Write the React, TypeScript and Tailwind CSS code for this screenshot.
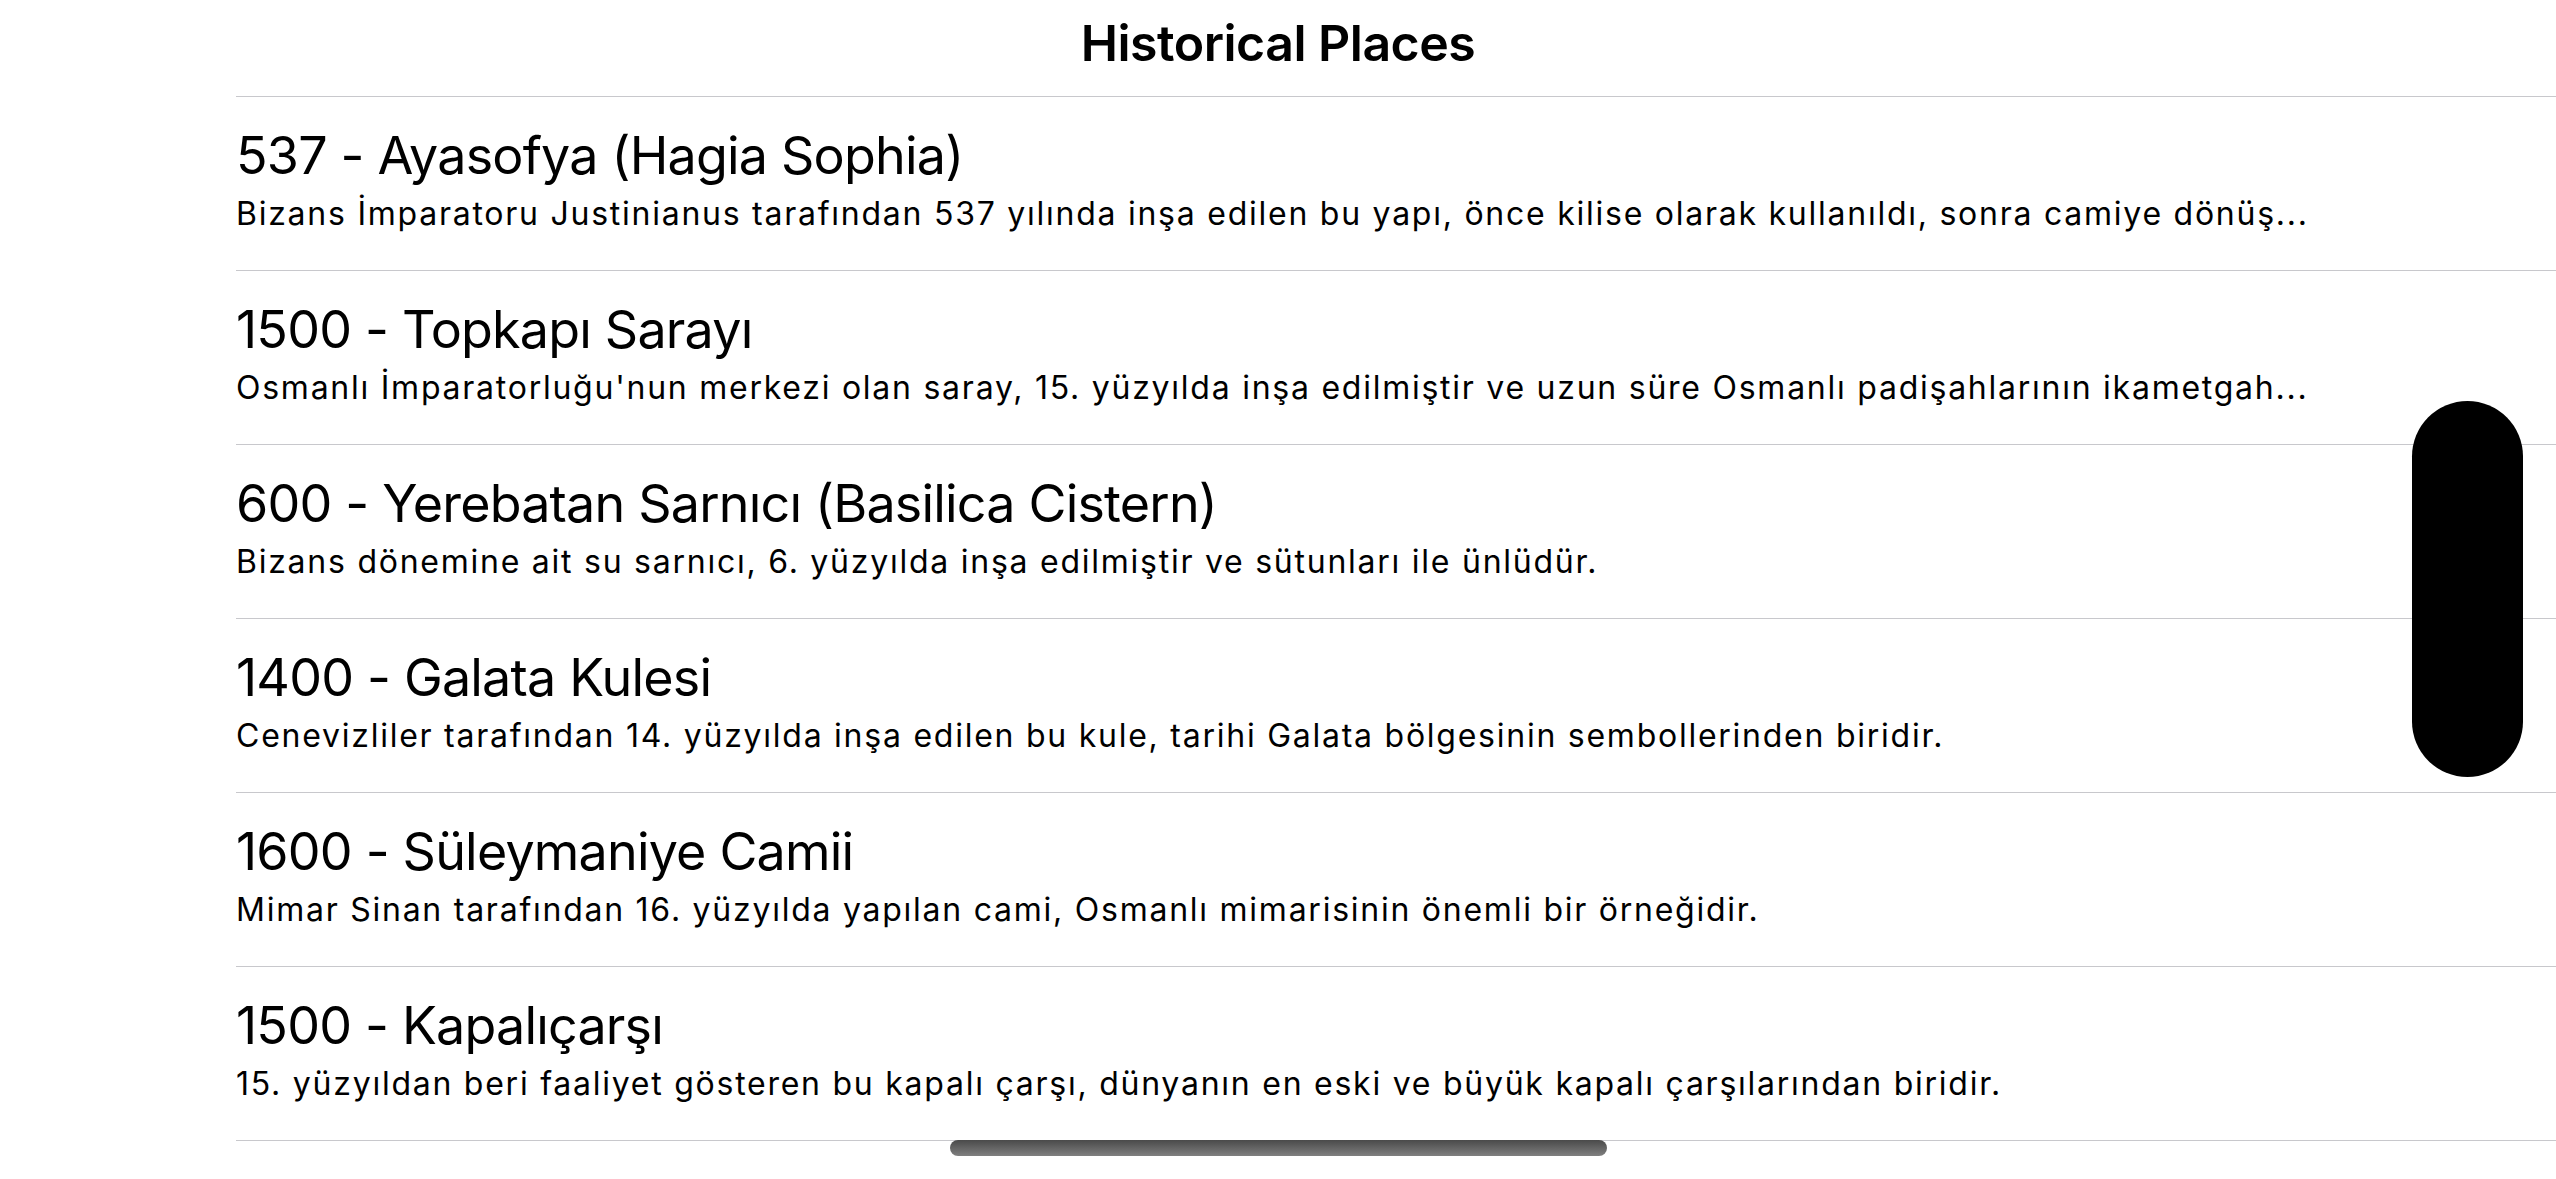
import React from "react";

const places = [
  {
    title: "537 - Ayasofya (Hagia Sophia)",
    desc: "Bizans İmparatoru Justinianus tarafından 537 yılında inşa edilen bu yapı, önce kilise olarak kullanıldı, sonra camiye dönüş...",
  },
  {
    title: "1500 - Topkapı Sarayı",
    desc: "Osmanlı İmparatorluğu'nun merkezi olan saray, 15. yüzyılda inşa edilmiştir ve uzun süre Osmanlı padişahlarının ikametgah...",
  },
  {
    title: "600 - Yerebatan Sarnıcı (Basilica Cistern)",
    desc: "Bizans dönemine ait su sarnıcı, 6. yüzyılda inşa edilmiştir ve sütunları ile ünlüdür.",
  },
  {
    title: "1400 - Galata Kulesi",
    desc: "Cenevizliler tarafından 14. yüzyılda inşa edilen bu kule, tarihi Galata bölgesinin sembollerinden biridir.",
  },
  {
    title: "1600 - Süleymaniye Camii",
    desc: "Mimar Sinan tarafından 16. yüzyılda yapılan cami, Osmanlı mimarisinin önemli bir örneğidir.",
  },
  {
    title: "1500 - Kapalıçarşı",
    desc: "15. yüzyıldan beri faaliyet gösteren bu kapalı çarşı, dünyanın en eski ve büyük kapalı çarşılarından biridir.",
  },
];

export default function App() {
  return (
    <div
      className="relative w-[2556px] h-[1179px] overflow-hidden bg-white text-black"
      style={{ fontFamily: "Inter, 'Noto Sans', sans-serif" }}
    >
      <div className="ml-[236px]">
        <div className="h-[97px] border-b border-[#c8c8cc] flex justify-center pt-[13px] pr-[236px]">
          <h1 className="text-[50px] leading-[60px] font-semibold tracking-[-0.5px]">Historical Places</h1>
        </div>
        {places.map((p) => (
          <div key={p.title} className="h-[174px] border-b border-[#c8c8cc] pt-[29px] pr-[236px]">
            <div className="text-[52px] leading-[60px] tracking-[-0.8px] whitespace-nowrap">{p.title}</div>
            <div className="mt-[10px] text-[32px] leading-[36px] tracking-[1.75px] whitespace-nowrap">
              {p.desc}
            </div>
          </div>
        ))}
      </div>

      <div className="absolute left-[2412px] top-[401px] w-[111px] h-[376px] rounded-full bg-black" />

      <div className="absolute left-[950px] top-[1140px] w-[657px] h-[16px] rounded-full bg-gradient-to-b from-[#4a4a4a] to-[#808080]" />
    </div>
  );
}
